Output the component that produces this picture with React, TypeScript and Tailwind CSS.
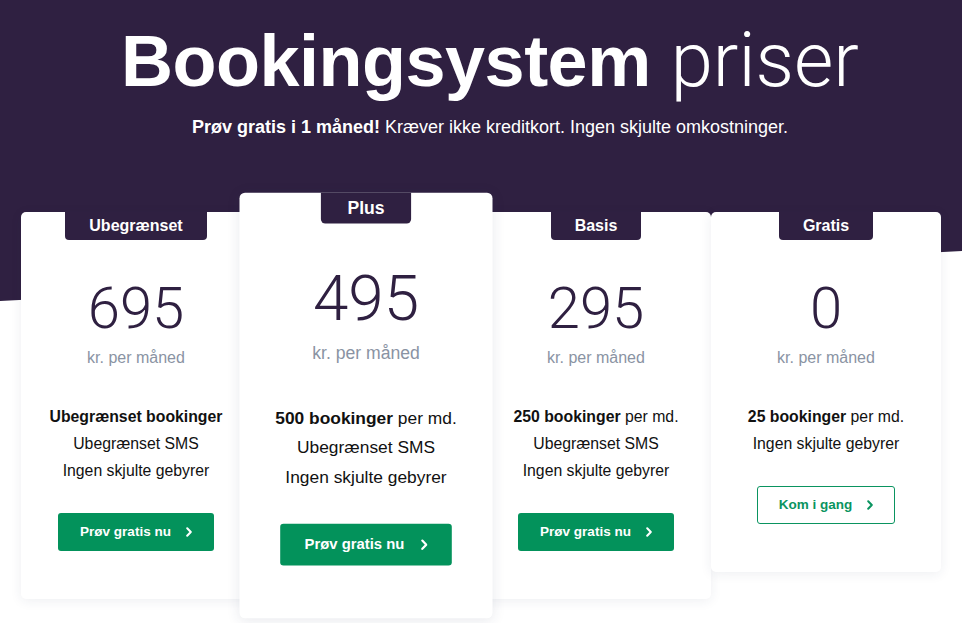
import React from 'react';

type Plan = {
  name: string;
  price: string;
  features: React.ReactNode[];
  cta: string;
  outline?: boolean;
  featured?: boolean;
};

const plans: Plan[] = [
  {
    name: 'Ubegrænset',
    price: '695',
    features: [<b key="b">Ubegrænset bookinger</b>, 'Ubegrænset SMS', 'Ingen skjulte gebyrer'],
    cta: 'Prøv gratis nu',
  },
  {
    name: 'Plus',
    price: '495',
    features: [
      <>
        <b>500 bookinger</b> per md.
      </>,
      'Ubegrænset SMS',
      'Ingen skjulte gebyrer',
    ],
    cta: 'Prøv gratis nu',
    featured: true,
  },
  {
    name: 'Basis',
    price: '295',
    features: [
      <>
        <b>250 bookinger</b> per md.
      </>,
      'Ubegrænset SMS',
      'Ingen skjulte gebyrer',
    ],
    cta: 'Prøv gratis nu',
  },
  {
    name: 'Gratis',
    price: '0',
    features: [
      <>
        <b>25 bookinger</b> per md.
      </>,
      'Ingen skjulte gebyrer',
    ],
    cta: 'Kom i gang',
    outline: true,
  },
];

function Chevron() {
  return (
    <svg width="6" height="10" viewBox="0 0 6 10" fill="none" className="shrink-0">
      <path d="M1.2 1.2 4.8 5 1.2 8.8" stroke="currentColor" strokeWidth="2" strokeLinecap="round" strokeLinejoin="round" />
    </svg>
  );
}

function PlanCard({ plan }: { plan: Plan }) {
  return (
    <div
      className={
        plan.featured
          ? 'relative z-10 flex scale-110 flex-col items-center rounded-[5px] bg-white pb-12 shadow-[0_2px_12px_rgba(40,50,90,0.10)]'
          : 'flex flex-col items-center rounded-[5px] bg-white pb-12 shadow-[0_2px_12px_rgba(40,50,90,0.08)]'
      }
    >
      <div className="flex h-[28px] items-center rounded-b-[4px] bg-[#2f2041] px-6 text-[16px] font-bold text-white">
        {plan.name}
      </div>
      <div className="mt-[39px] font-['Roboto',sans-serif] text-[58px] font-light leading-none text-[#2f2041]">
        {plan.price}
      </div>
      <div className="mt-[9px] text-[16px] leading-6 text-[#8a93a3]">kr. per måned</div>
      <ul className="mt-[33px] text-center text-[15.8px] leading-[27px] text-[#111]">
        {plan.features.map((f, i) => (
          <li key={i}>{f}</li>
        ))}
      </ul>
      <button
        className={
          plan.outline
            ? 'mt-[29px] flex h-[38px] items-center gap-[15px] rounded-[3px] border-[1.5px] border-[#0a9460] bg-white px-[21px] text-[13.5px] font-bold text-[#0a9460]'
            : 'mt-[29px] flex h-[38px] items-center gap-[15px] rounded-[3px] bg-[#03925b] px-[22px] text-[13.5px] font-bold text-white'
        }
      >
        {plan.cta}
        <Chevron />
      </button>
    </div>
  );
}

export default function App() {
  return (
    <div className="relative min-h-[623px] overflow-hidden bg-white font-['Liberation_Sans',Arial,sans-serif]">
      <div className="absolute inset-x-0 top-0 h-[301px] bg-[#2f2041] [clip-path:polygon(0_0,100%_0,100%_83.4%,0_100%)]" />

      <header className="relative pl-[18px] pt-[22px] text-center text-white">
        <h1 className="text-[72px] leading-none">
          <span className="font-bold tracking-[-0.5px]">Bookingsystem</span>{' '}
          <span className="font-['Roboto',sans-serif] text-[76px] font-light">priser</span>
        </h1>
        <p className="mt-[17px] text-[18px] leading-6">
          <b>Prøv gratis i 1 måned!</b> Kræver ikke kreditkort. Ingen skjulte omkostninger.
        </p>
      </header>

      <div className="relative mx-auto mt-[73px] grid w-[920px] grid-cols-4 items-start">
        {plans.map((p) => (
          <PlanCard key={p.name} plan={p} />
        ))}
      </div>
    </div>
  );
}
